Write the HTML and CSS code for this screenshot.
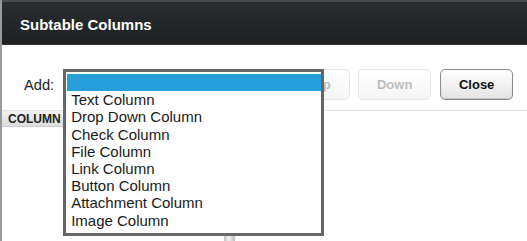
FILE: index.html
```html
<!DOCTYPE html>
<html lang="en">
<head>
    <meta charset="UTF-8">
    <title>Subtable Columns</title>
    <link rel="stylesheet" href="styles.css">
</head>
<body>
    <div class="dialog">
        <div class="dialog-header">Subtable Columns</div>
        <div class="toolbar">
            <label class="add-label">Add:</label>
            <div class="select-wrap">
                <div class="select"></div>
                <ul class="select-list">
                    <li class="selected"></li>
                    <li>Text Column</li>
                    <li>Drop Down Column</li>
                    <li>Check Column</li>
                    <li>File Column</li>
                    <li>Link Column</li>
                    <li>Button Column</li>
                    <li>Attachment Column</li>
                    <li>Image Column</li>
                </ul>
            </div>
            <button class="btn btn-small" disabled>Up</button>
            <button class="btn" disabled>Down</button>
            <button class="btn">Close</button>
        </div>
        <div class="columns-table">
            <div class="table-head">COLUMN</div>
            <div class="table-body"></div>
        </div>
        <div class="grip"></div>
    </div>
</body>
</html>
```

FILE: styles.css
```css
body {
    margin: 0;
    background-color: #fff;
    font-family: 'Liberation Sans', Arial, sans-serif;
    color: #222;
}
.dialog {
    height: 241px;
    border-left: 2px solid #9a9a9a;
    overflow: hidden;
}
.dialog-header {
    height: 28px;
    padding: 14px 0 0 18px;
    border-top: 2px solid #494b4e;
    border-bottom: 1px solid #34373a;
    background: linear-gradient(#2a2d30, #1e2022);
    color: #fff;
    font-weight: bold;
    font-size: 15px;
    line-height: 17px;
}
.toolbar {
    display: flex;
    align-items: center;
    padding: 24px 0 10px 22px;
    border-bottom: 1px solid #e6e6e6;
}
.add-label {
    font-size: 14.67px;
    margin-right: 9px;
    color: #222;
}
.select-wrap {
    position: relative;
    width: 222px;
    height: 31px;
    margin-right: 9px;
}
.select {
    height: 100%;
}
.select-list {
    position: absolute;
    top: 0;
    left: 0;
    z-index: 2;
    width: 254px;
    height: 159px;
    margin: 0;
    padding: 2px 0 0 1px;
    list-style: none;
    background-color: #fff;
    border: 3px solid #666;
}
.select-list li {
    height: 17.2px;
    padding-left: 4px;
    font-size: 15px;
    line-height: 17.2px;
    color: #1a1a1a;
    white-space: nowrap;
}
.select-list li.selected {
    background-color: #26a0da;
}
.btn {
    width: 73px;
    height: 31px;
    margin-right: 9px;
    font-family: inherit;
    font-size: 13px;
    font-weight: bold;
    color: #111;
    background: linear-gradient(#ffffff, #e4e4e4);
    border: 1px solid #8c8c8c;
    border-radius: 5px;
    box-shadow: inset 0 -1px 1px rgba(0, 0, 0, 0.15);
}
.btn-small {
    width: 56px;
    margin-right: 8px;
}
.btn:disabled {
    color: #bdbdbd;
    background: linear-gradient(#ffffff, #f6f6f6);
    border-color: #e6e6e6;
    box-shadow: none;
}
.columns-table {
    width: 228px;
}
.table-head {
    height: 15px;
    padding-left: 6px;
    font-size: 12px;
    font-weight: bold;
    line-height: 16px;
    color: #222;
    background: linear-gradient(#f3f3f3, #dcdcdc);
    border-bottom: 1px solid #cfcfcf;
}
.table-body {
    height: 107px;
}
.grip {
    width: 11px;
    height: 8px;
    margin-left: 222px;
    background: linear-gradient(90deg, #c4c4c4, #f0f0f0 45%, #bdbdbd);
}
```
